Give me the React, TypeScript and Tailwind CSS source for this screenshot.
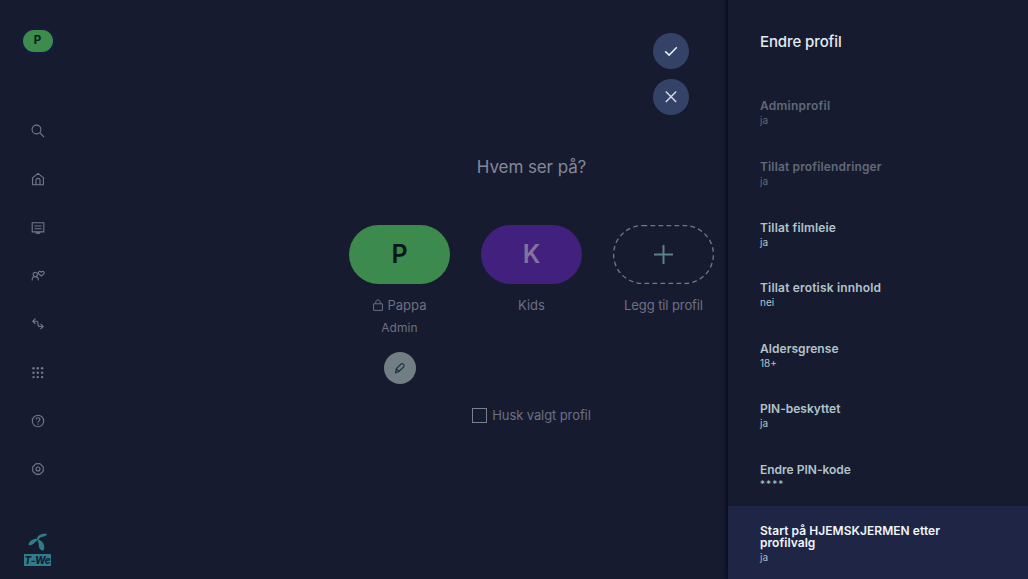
import React from 'react';
import { clsx } from 'clsx';

interface Setting {
    label: string;
    value: string;
    state?: 'disabled' | 'active';
    labelClass?: string;
    valueClass?: string;
}

const settings: Setting[] = [
    { label: 'Adminprofil', value: 'ja', state: 'disabled', labelClass: 'tracking-[0.25px]' },
    { label: 'Tillat profilendringer', value: 'ja', state: 'disabled', labelClass: 'tracking-[0.15px]' },
    { label: 'Tillat filmleie', value: 'ja', labelClass: 'tracking-[0.15px]' },
    { label: 'Tillat erotisk innhold', value: 'nei', labelClass: 'tracking-[0.18px]' },
    { label: 'Aldersgrense', value: '18+', labelClass: 'tracking-[0.05px]' },
    { label: 'PIN-beskyttet', value: 'ja' },
    { label: 'Endre PIN-kode', value: '****', valueClass: 'tracking-[1.1px]' },
    { label: 'Start på HJEMSKJERMEN etter profilvalg', value: 'ja', state: 'active', labelClass: 'tracking-[0.05px]' },
];

const NavIcon: React.FC<{ children: React.ReactNode }> = ({ children }) => (
    <button className="flex h-[48.3px] w-full items-center justify-center text-[#74788a]">
        <svg width="14" height="14" viewBox="0 0 14 14" fill="none" stroke="currentColor" strokeWidth="1.1">
            {children}
        </svg>
    </button>
);

const Logo = () => (
    <div className="mt-[40px] flex flex-col items-center">
        <svg width="20" height="18" viewBox="0 0 20 18" fill="#307d8a">
            <path d="M9.2 6.6C8.6 3.2 12.2.4 18.3.8c1 .4.3 1.5-.6 2-2.6 1.2-5.3.6-7.1 4z" />
            <path d="M9.4 5.9C5.5 5.4 1.6 7.9.6 11c0 1.3 1.2 1.5 2.6.9 3.1-.9 4.2-3.7 6.6-4.6z" />
            <path d="M9.1 6.3c5 1 8 5 7 9.8-.4 1.8-2.1 1.9-3.4.7-2.9-2.4-1-6.2-3.6-10.5z" />
        </svg>
        <div className="mt-[3px] flex h-[12px] w-[27px] items-center justify-center bg-[#307d8a] text-[10px] leading-none font-extrabold tracking-[-0.3px] text-[#15203a] italic">
            T-We
        </div>
    </div>
);

const Sidebar = () => (
    <nav className="flex w-[76px] shrink-0 flex-col items-center border-r border-[#151931] pt-[30px]">
        <div className="flex h-[22px] w-[30px] items-center justify-center rounded-full bg-[#3c8c4d] text-[11.5px] font-bold text-[#071c19] shadow-[0_0_0_4px_#171b38]">
            P
        </div>
        <div className="mt-[55px] flex w-full flex-col">
            {/* Search */}
            <NavIcon>
                <circle cx="5.5" cy="5.5" r="4.4" />
                <path d="M8.7 8.7 13 13" />
            </NavIcon>
            {/* Home */}
            <NavIcon>
                <path d="m.9 6.4 6.1-5 6.1 5M1.6 5.8v7h10.8v-7M5 12.8V8c0-1 .7-1.6 2-1.6s2 .6 2 1.6v4.8" />
            </NavIcon>
            {/* TV */}
            <NavIcon>
                <path d="M1.2 1.7h11.6v9.2H1.2zM3.4 5h7.2M3.4 7.7h7.2" />
                <path d="M4.8 12h4.4" strokeWidth="1.6" />
            </NavIcon>
            {/* For you */}
            <NavIcon>
                <circle cx="4.3" cy="5.4" r="2.1" />
                <path d="M1.2 11.5v-1.2c0-1.7 1-2.6 3.1-2.6s3 .9 3 2.6v1.2M10.3 7 7.8 4.9c-1-1.3.1-2.9 1.4-2.5.6.2 1.1.8 1.1.8s.5-.6 1.1-.8c1.3-.4 2.4 1.2 1.4 2.5z" />
            </NavIcon>
            {/* Swap */}
            <NavIcon>
                <path d="M4.5 1.6 1.8 4.3 4.5 7M2 4.3h3.2c1.2 0 1.8.8 1.8 1.8v1.4c0 1.1.8 2 1.9 2H12M9.5 6.8l2.7 2.7-2.7 2.7" />
            </NavIcon>
            {/* Apps */}
            <NavIcon>
                {[2.3, 6.7, 11.1].map(y => [2.5, 6.8, 11.1].map(x => (
                    <circle key={`${x}-${y}`} cx={x} cy={y} r="1.2" fill="currentColor" stroke="none" />
                )))}
            </NavIcon>
            {/* Help */}
            <NavIcon>
                <circle cx="7" cy="7" r="5.7" />
                <path d="M5.1 5.6c0-2.4 3.8-2.4 3.8 0C8.9 7 7 6.8 7 8.4M7 9.5v1.2" />
            </NavIcon>
            {/* Settings */}
            <NavIcon>
                <path d="m5.4 1.5 1.6.4 1.6-.4 1.3.8.6 1.2 1.4.9.5 1.2-.3 1.4.3 1.5-.6 1.3-1.3.8-.8 1.2-1.3.6L7 12.1l-1.4.3-1.3-.6-.8-1.2-1.3-.8-.6-1.3.3-1.5-.3-1.4.5-1.2 1.4-.9.6-1.2z" />
                <circle cx="7" cy="7" r="2" />
            </NavIcon>
        </div>
        <Logo />
    </nav>
);

const Profiles = () => (
    <main className="flex w-[652px] shrink-0 flex-col items-end pt-[33px] pr-[14px]">
        <div className="mr-[25px] flex flex-col gap-2.5">
            <button className="flex size-9 items-center justify-center rounded-full bg-[#344267]">
                <svg width="14" height="14" viewBox="0 0 14 14" fill="none" stroke="#e5edf5" strokeWidth="1.5">
                    <path d="m1.2 7.4 3.9 3.7 7.7-7.8" />
                </svg>
            </button>
            <button className="flex size-9 items-center justify-center rounded-full bg-[#344267]">
                <svg width="14" height="14" viewBox="0 0 14 14" fill="none" stroke="#d5deea" strokeWidth="1.4">
                    <path d="m1.8 1.6 10.4 10.4M12.2 1.6 1.8 12" />
                </svg>
            </button>
        </div>

        <div className="mt-[40px] flex w-[365px] flex-col items-center text-[#6c7082]">
            <h1 className="text-[17px] leading-6 tracking-[-0.08px] whitespace-nowrap text-[#858999]">Hvem ser på?</h1>

            <div className="mt-[46px] flex w-full justify-between text-[13px] leading-5">
                <div className="flex w-[101px] flex-col items-center">
                    <div className="flex h-[59px] w-full items-center justify-center rounded-full bg-[#3c8a4d] pb-[2px] text-[25px] font-semibold text-[#06151b]">P</div>
                    <div className="mt-[11px] flex items-center gap-[5px]">
                        <svg width="10" height="12" viewBox="0 0 10 12" fill="none" stroke="currentColor" strokeWidth="1">
                            <path d="M.6 4.8h8.8v6.6H.6zM2.8 4.8V3C2.8.2 7.2.2 7.2 3v1.8" />
                        </svg>
                        <span>Pappa</span>
                    </div>
                    <div className="mt-[3px] text-[12px] tracking-[0.1px]">Admin</div>
                    <button className="mt-[14px] flex size-8 items-center justify-center rounded-full bg-[#717f85]">
                        <svg width="12" height="12" viewBox="0 0 12 12" fill="none" stroke="#202940" strokeWidth="1.1">
                            <path d="m1.5 10.6.8-3.8 4.6-4.7c1.3-1.2 4.3.5 2.8 2.7L5 9.5zM2.3 6.8 5 9.5" />
                        </svg>
                    </button>
                </div>
                <div className="flex w-[101px] flex-col items-center">
                    <div className="flex h-[59px] w-full items-center justify-center rounded-full bg-[#41207e] pb-[2px] text-[25px] font-semibold text-[#83739c]">K</div>
                    <div className="mt-[11px]">Kids</div>
                </div>
                <div className="flex w-[101px] flex-col items-center">
                    <svg width="101" height="59" viewBox="0 0 101 59" fill="none">
                        <rect x=".6" y=".6" width="99.8" height="57.8" rx="28.9" stroke="#6f7a8b" strokeWidth="1.3" strokeDasharray="4.7 3.3" />
                        <path d="M50.5 20v19M41 29.5h19" stroke="#5b8488" strokeWidth="2" />
                    </svg>
                    <div className="mt-[11px] tracking-[-0.1px] whitespace-nowrap">Legg til profil</div>
                </div>
            </div>

            <div className="mt-[21px] flex items-center gap-[5px] text-[13px] leading-5 tracking-[-0.1px]">
                <span className="size-[15px] border border-[#7b8090]" />
                <span className="whitespace-nowrap">Husk valgt profil</span>
            </div>
        </div>
    </main>
);

const SettingsPanel = () => (
    <aside className="flex w-[300px] shrink-0 flex-col bg-[#171b2f] shadow-[-1px_0_4px_1px_#080c24]">
        <h2 className="h-[82px] pt-[31px] pl-8 text-[15px] leading-[22px] font-medium tracking-[-0.1px] text-[#e2edf0]">Endre profil</h2>
        {settings.map(({ label, value, state, labelClass, valueClass }) => (
            <div
                key={label}
                className={clsx(
                    'pt-[18.4px] pl-8',
                    state === 'active' ? 'flex-1 bg-[#1f2545]' : 'h-[60.6px] shrink-0',
                    state === 'disabled' && 'text-[#606979]',
                    !state && 'text-[#b2c4ca]',
                )}
            >
                <div className={clsx('w-[195px] text-[12px] leading-3 font-semibold', labelClass, state === 'active' && 'text-[#f1f6fa]')}>{label}</div>
                <div className={clsx('mt-[2px] text-[10px] leading-3', valueClass, state === 'active' && 'text-[#a9b9c6]')}>{value}</div>
            </div>
        ))}
    </aside>
);

export default function App() {
    return (
        <div className="flex h-[579px] w-[1028px] overflow-hidden bg-[#171b2f] font-[Inter,'Liberation_Sans',sans-serif]">
            <Sidebar />
            <Profiles />
            <SettingsPanel />
        </div>
    );
}
